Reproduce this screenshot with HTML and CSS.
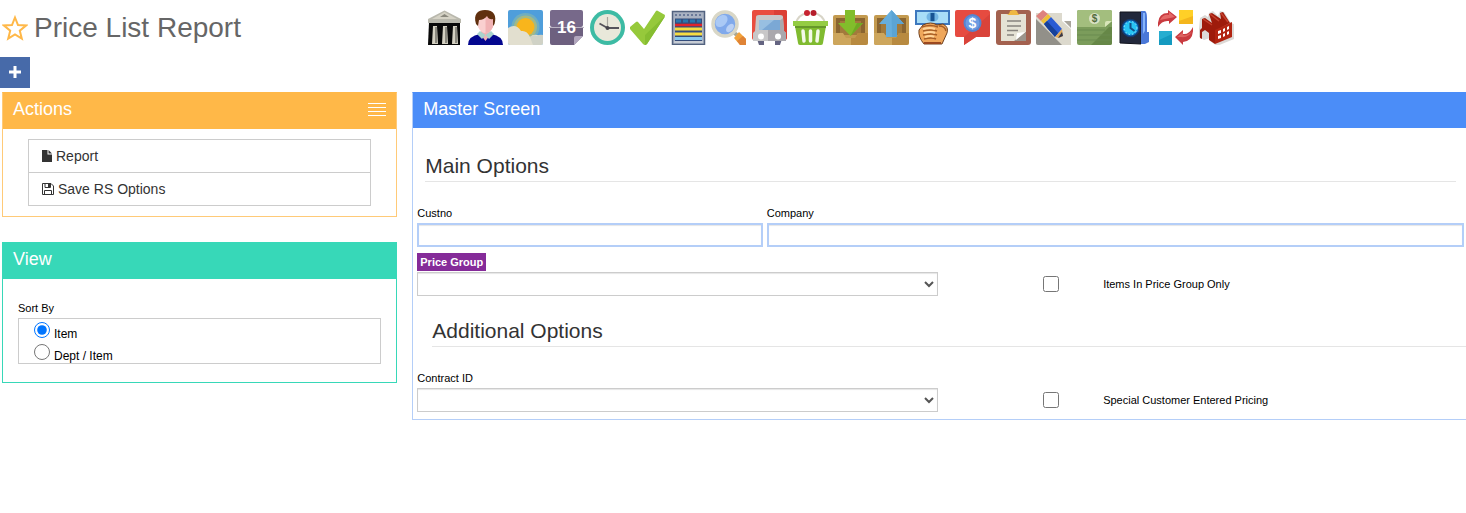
FILE: index.html
```html
<!DOCTYPE html>
<html lang="en">
<head>
    <meta charset="UTF-8">
    <meta name="viewport" content="width=device-width, initial-scale=1.0">
    <title>Price List Report</title>
    <link rel="stylesheet" href="styles.css">
</head>
<body>
    <header class="page-header">
        <h1 class="page-title">
            <svg class="star" viewBox="0 0 26 26"><path d="M13 2.500l3 7.500 8 .5-6.200 5.200 2 8L13 19.500l-6.800 4.200 2-8L2 10.500l8-.5z" fill="none" stroke="#ffb848" stroke-width="2"/></svg>
            Price List Report
        </h1>
        <nav class="toolbar">
            <!-- bank -->
            <a href="#" aria-label="Bank"><svg viewBox="0 0 35 35">
                <path d="M2 12h31v23H1z" fill="#080808"/>
                <path d="M17.500.5L34 9v4H1V9z" fill="#b9b8ad"/>
                <path d="M17.500 2L30 9H5z" fill="#d5d2c5"/><path d="M13 7l4.500-3L22 7z" fill="#8a887d"/>
                <path d="M6 16h4l1 18H5zM16 16h4l1 18h-6zM26 16h4l1 18h-6z" fill="#d4d1c2"/>
                <path d="M9 17v16M19 17v16M29 17v16" stroke="#8b897f" stroke-width="2"/>
            </svg></a>
            <!-- person -->
            <a href="#" aria-label="Customers"><svg viewBox="0 0 35 35">
                <path d="M0 35q0-9 12-11h11q12 2 12 11z" fill="#04078f"/>
                <path d="M13 19h9v6l-4.500 6-4.500-6z" fill="#f1b3b5"/>
                <path d="M12 21l-3 3 5 5 3.500-4zM23 21l3 3-5 5-3.500-4z" fill="#a9d3cd"/>
                <path d="M9 9q0-6 8.500-6T26 9l-1 8q-3 6-7.500 6T10 17z" fill="#fad0d0"/>
                <path d="M17.500 4q8 0 8.500 5l-1 8q-3 6-7.500 6z" fill="#f1b3b5"/>
                <path d="M8 14C5 4 10 0 17 0c9 0 12 6 9.500 14l-1.500 2V9q-4 1-6-3-3 4-8 4l-1 6z" fill="#60300f"/>
            </svg></a>
            <!-- weather -->
            <a href="#" aria-label="Weather"><svg viewBox="0 0 35 35">
                <rect width="35" height="35" rx="2" fill="#4f9edb"/>
                <circle cx="17.500" cy="17" r="14" fill="#70aebf"/><circle cx="17.500" cy="17" r="11.500" fill="#a3b985"/>
                <circle cx="17.500" cy="17" r="9" fill="#f8b51c"/>
                <path d="M0 18q8-5 13 3 6-1 9 6 3-3 7-2 3 1 6 1v7q0 2-2 2H2q-2 0-2-2z" fill="#e2dfcf"/>
                <path d="M22 27q3-3 7-1 3-2 6-1v8l-2 2h-8z" fill="#d0d2c6"/>
            </svg></a>
            <!-- calendar -->
            <a href="#" aria-label="Calendar"><svg viewBox="0 0 35 35">
                <rect x="1" width="33" height="17" rx="2" fill="#77698a"/>
                <path d="M1 18h33v8l-9 9H3q-2 0-2-2z" fill="#6d607f"/>
                <path d="M25 35v-7q0-2 2-2h7z" fill="#b1a6bd"/>
                <path d="M0 17.500h35" stroke="#bab3c3"/>
                <text x="17.500" y="23" text-anchor="middle" class="icon-text" font-size="17" fill="#fff">16</text>
            </svg></a>
            <!-- clock -->
            <a href="#" aria-label="Clock"><svg viewBox="0 0 35 35">
                <circle cx="17.500" cy="17.500" r="17.500" fill="#3dbba4"/><circle cx="17.500" cy="17.500" r="13.500" fill="#e9e8da"/>
                <path d="M17.500 18V7" stroke="#a8a69e" stroke-width="1.200"/>
                <path d="M17.500 18H29M17.500 18L9.500 13.500" stroke="#55535b" stroke-width="1.800"/><circle cx="17.500" cy="18" r="2" fill="#47454c"/>
            </svg></a>
            <!-- check -->
            <a href="#" aria-label="Approve"><svg viewBox="0 0 35 35">
                <path d="M0 17l6-5q1-1 2 0l6 7L26 1q1-1 2 0l7 4q0 1-1 3L17 34q-2 2-4 0L0 19z" fill="#96c93b"/>
                <path d="M15 25L35 6q0 1-1 2L17 34q-1 1-2 1z" fill="#86bd31"/>
            </svg></a>
            <!-- register -->
            <a href="#" aria-label="Schedule"><svg viewBox="0 0 35 35">
                <rect x="1.500" y="1.500" width="32" height="33" fill="#a9b2c2" stroke="#52627f" stroke-width="1.500"/>
                <path d="M4 5h27" stroke="#6a7999" stroke-width="2" stroke-dasharray="2 2"/>
                <path d="M4 8.500h27v23H4z" fill="#344c7b"/>
                <path d="M5 11h25" stroke="#2877af" stroke-width="3" stroke-dasharray="5 2"/>
                <path d="M4 15h27" stroke="#df232b" stroke-width="2.500"/>
                <path d="M4 19h27M4 24h27" stroke="#f6dc43" stroke-width="3"/>
                <path d="M4 28.500h27" stroke="#88c9ed" stroke-width="3"/>
                <path d="M3 32h29" stroke="#c7ccd4" stroke-width="2"/>
            </svg></a>
            <!-- search -->
            <a href="#" aria-label="Search"><svg viewBox="0 0 35 35">
                <path d="M22 22l4 3" stroke="#a9a895" stroke-width="4"/><path d="M23 28l5-6 7 7v6h-6z" fill="#f2a23a"/><path d="M26 31l6-5 3 3v6h-6z" fill="#df8336"/>
                <circle cx="14" cy="14" r="12" fill="#80a9eb" stroke="#d9d7c7" stroke-width="3.500"/>
                <ellipse cx="10.500" cy="11" rx="5" ry="7" transform="rotate(45 10.500 11)" fill="#aac9f5"/><ellipse cx="19" cy="18" rx="3" ry="5" transform="rotate(40 19 18)" fill="#b9d0f5"/>
            </svg></a>
            <!-- truck -->
            <a href="#" aria-label="Shipping"><svg viewBox="0 0 35 35">
                <path d="M5 29h7v6H7zM23 29h7l-2 6h-5z" fill="#646481"/>
                <rect width="35" height="30" rx="2" fill="#e94d3f"/><path d="M22 0h11q2 0 2 2v26l-2 2H22z" fill="#db4035"/>
                <path d="M4 7q0-2 3-2h21q3 0 3 2l1 14 2 2v8H1v-8l2-2z" fill="#c8c7c8"/>
                <path d="M16 20L31 8l1 13 2 2v8H16z" fill="#aaa8ad"/>
                <path d="M7 10h21v10H7z" fill="#7ba8d5"/><path d="M7 10h15L10 20H7z" fill="#98bfe1"/>
                <circle cx="9" cy="26.500" r="3" fill="#fff"/><circle cx="26" cy="26.500" r="3" fill="#fff"/>
            </svg></a>
            <!-- basket -->
            <a href="#" aria-label="Basket"><svg viewBox="0 0 35 35">
                <path d="M3 13Q5 5 14 3M32 13Q30 5 21 3" fill="none" stroke="#d8d5c8" stroke-width="2"/>
                <circle cx="14" cy="3" r="3" fill="#c72330"/><circle cx="20.500" cy="3" r="3" fill="#b51d2b"/>
                <path d="M0 11h35v5H0z" fill="#94cc43"/><path d="M2 16h31l-3 17q0 2-2 2H7q-2 0-2-2z" fill="#80bb30"/>
                <path d="M2 16h31v2H2z" fill="#66972a"/>
                <path d="M10 21l1 10M17.500 21v10M25 21l-1 10" stroke="#f3f9e8" stroke-width="3.500" stroke-linecap="round"/>
            </svg></a>
            <!-- inbox in -->
            <a href="#" aria-label="Receive"><svg viewBox="0 0 35 35">
                <rect y="5" width="35" height="30" rx="2" fill="#c39a4f"/><path d="M3 8h29v17H3z" fill="#8a6531"/><path d="M7 11h21v14H7z" fill="#a27a3c"/>
                <path d="M0 23h10l3 5h9l3-5h10v10q0 2-2 2H2q-2 0-2-2z" fill="#cda65c"/><path d="M18 28h4l3-5h10v10l-2 2H18z" fill="#b88a40"/>
                <path d="M12 0h10v13h8L17.500 26 5 13h7z" fill="#82bd2b"/><path d="M17.500 26L30 13h-6z" fill="#6fa923"/>
            </svg></a>
            <!-- inbox out -->
            <a href="#" aria-label="Send"><svg viewBox="0 0 35 35">
                <rect y="5" width="35" height="30" rx="2" fill="#c39a4f"/><path d="M3 8h29v17H3z" fill="#8a6531"/><path d="M7 11h21v14H7z" fill="#a27a3c"/>
                <path d="M0 23h10l3 5h9l3-5h10v10q0 2-2 2H2q-2 0-2-2z" fill="#cda65c"/><path d="M18 28h4l3-5h10v10l-2 2H18z" fill="#b88a40"/>
                <path d="M17.500 0L30 14h-7v13H12V14H5z" fill="#66aedd"/><path d="M17.500 0L30 14h-7v13h-5z" fill="#5ba4d4"/>
            </svg></a>
            <!-- hand with bill -->
            <a href="#" aria-label="Payment"><svg viewBox="0 0 35 35">
                <rect x="1" y="1" width="33" height="13" fill="#a8ddf7" stroke="#3d78be" stroke-width="2"/>
                <ellipse cx="17.500" cy="7" rx="6" ry="5" fill="#73b5e4"/><path d="M17.500 3v8" stroke="#175393" stroke-width="4"/>
                <path d="M8 15q8-4 14 0l6-1q6 3 4 9l-5 11H9q-6-7-5-14z" fill="#efa65a" stroke="#70401e"/>
                <path d="M7 17q8-3 16 0M8 21q9-2 14 0M8 25q9-2 14 0M9 29q8-2 12 0M24 16q6 0 7 5" fill="none" stroke="#a65d26" stroke-width="1.500"/>
                <path d="M8 19q7-2 12 0M9 23q7-2 11 0M10 27q6-2 9 0" fill="none" stroke="#ffd499" stroke-width="2"/>
                <path d="M9 33h17" stroke="#9b4820" stroke-width="2"/>
            </svg></a>
            <!-- dollar bubble -->
            <a href="#" aria-label="Quotes"><svg viewBox="0 0 35 35">
                <path d="M2 0h31q2 0 2 2v23q0 2-2 2H21L9 35v-8H2q-2 0-2-2V2q0-2 2-2z" fill="#e64b40"/><path d="M35 4v21q0 2-2 2H21L9 35v-8z" fill="#d9433a"/>
                <circle cx="17.500" cy="13" r="9" fill="#5584cf"/><circle cx="17.500" cy="13" r="7" fill="#6c9be2"/>
                <text x="17.500" y="18" text-anchor="middle" class="icon-text" font-size="14" fill="#fff">$</text>
            </svg></a>
            <!-- clipboard -->
            <a href="#" aria-label="Clipboard"><svg viewBox="0 0 35 35">
                <rect width="35" height="35" rx="3" fill="#a3614f"/><path d="M5 4h25v18l-9 9H5z" fill="#e5e2d5"/>
                <path d="M18 31l12-9v9z" fill="#9b948b"/><path d="M20 30l1-7 8-1z" fill="#fff"/>
                <path d="M10 5q3 0 4-4 4-2 7 0 1 4 4 4z" fill="#efb740"/>
                <path d="M11 11h14M11 16h14M11 20.500h11M11 25h7" stroke="#87837e" stroke-width="1.500"/>
            </svg></a>
            <!-- pencil -->
            <a href="#" aria-label="Edit"><svg viewBox="0 0 35 35">
                <path d="M0 3h26v8l9 8v16H2q-2 0-2-2z" fill="#dcd9cd"/><path d="M28 11l7 7v-7z" fill="#aaa69d"/><path d="M0 9l26 26H2q-2 0-2-2z" fill="#929089"/>
                <path d="M0 6l7-6 5 4-7 7z" fill="#de827e"/><path d="M5 11l7-7 3 3-7 7z" fill="#edbf39"/>
                <path d="M8 14l7-7 11 12-7 8z" fill="#295bd3"/><path d="M11 18l-3-4 3-3 11 12-3 4z" fill="#174199"/>
                <path d="M19 27l7-8 1 7-4 2z" fill="#e2aa5a"/><path d="M22 28l5-2-1-4z" fill="#36384b"/>
            </svg></a>
            <!-- money -->
            <a href="#" aria-label="Money"><svg viewBox="0 0 35 35">
                <rect width="35" height="35" rx="2" fill="#7b9c5b"/><path d="M2 0h31q2 0 2 2v9l-7 6H0V2q0-2 2-2z" fill="#a3be7e"/>
                <path d="M14 35L32 17h3v16q0 2-2 2z" fill="#668747"/><path d="M0 20h28M0 25h35M0 30h35" stroke="#6a8b50"/>
                <path d="M28 17v-4q0-2 2-2h5z" fill="#d8e5b9"/>
                <circle cx="17.500" cy="8.500" r="5.500" fill="#d8e1c5"/>
                <text x="17.500" y="12" text-anchor="middle" class="icon-text" font-size="10" fill="#526c3d">$</text>
            </svg></a>
            <!-- time folder -->
            <a href="#" aria-label="Time Clock"><svg viewBox="0 0 35 35">
                <path d="M2 2h21v32L2 33z" fill="#22283b" stroke="#10131d"/><path d="M23 1h4q2 1 2 7v14h2v10l-4 2h-4z" fill="#4a78d8"/><path d="M25 3h2v18l-2 3z" fill="#86b5fa"/>
                <circle cx="12.500" cy="18" r="8.500" fill="#087fd1" stroke="#153a70" stroke-width="1.500"/><circle cx="12.500" cy="18" r="6.500" fill="#27c4f3" stroke="#a5f4ff" stroke-dasharray="1.500 2"/>
                <path d="M12.500 13v5l4 3" fill="none" stroke="#125188" stroke-width="2"/>
            </svg></a>
            <!-- exchange -->
            <a href="#" aria-label="Transfer"><svg viewBox="0 0 35 35">
                <path d="M21 0h14v14H21z" fill="#f4b61c"/><path d="M21 0h14v6L21 11z" fill="#ffd027"/>
                <path d="M1 21h13v14H1z" fill="#149ac0"/><path d="M1 21h13v3L1 30z" fill="#26add0"/>
                <path d="M0 17Q-1 3 10 3V0l9 7-8 7v-3Q4 10 0 17z" fill="#c93b40"/><path d="M2 10q3-6 9-5V2l6 5z" fill="#e46967"/>
                <path d="M35 17q1 14-10 15v3l-8-8 8-7v4q6 1 10-7z" fill="#c93b40"/><path d="M34 21q-3 7-11 6l-4 0 6-5v3q5 1 9-4z" fill="#dd6260"/>
            </svg></a>
            <!-- factory -->
            <a href="#" aria-label="Factory"><svg viewBox="0 0 35 35">
                <path d="M0 19L1 8l5-3 3 2 1-4 4-2 5 5 2-5 4 1 7 11 3 1v15l-17 7-7-5v-3l-6 2-5-3z" fill="#dcd9d6"/>
                <path d="M1 20l2-2V9l3-1 7 5-3-9 3-1 9 6-1-6 3-1 7 11-15 8v13l-6-4v-7l-4-3-3 2v7l-2-1z" fill="#9e1b0b"/>
                <path d="M16 20l17-8v15l-17 7z" fill="#b22411"/>
                <path d="M4 9l9 6M11 4l9 7M22 3l7 9" stroke="#c5402d" stroke-width="1.500"/>
                <path d="M19 21l3-1v3l-3 1zM24 19l2-1v3l-2 1zM28 17l2-1v3l-2 1zM19 26l3-1v3l-3 1zM24 24l2-1v3l-2 1zM28 22l2-1v3l-2 1z" fill="#fff"/>
            </svg></a>
        </nav>
    </header>

    <button type="button" class="add-button" aria-label="Add">
        <svg viewBox="0 0 12 12"><path d="M6 0v12M0 6h12" stroke="#fff" stroke-width="3"/></svg>
    </button>

    <div class="columns">
        <aside>
            <section class="panel actions">
                <div class="panel-head">
                    <h2>Actions</h2>
                    <button type="button" class="menu-button" aria-label="Menu">
                        <svg viewBox="0 0 18 13" shape-rendering="crispEdges"><path d="M0 .5h18M0 4.500h18M0 8.500h18M0 12.500h18" stroke="#fff"/></svg>
                    </button>
                </div>
                <div class="action-list">
                    <a href="#"><svg class="file" viewBox="0 0 10 12"><path d="M0 0h5.500v4.500H10V12H0z" fill="#333"/><path d="M6.500 0L10 3.500H6.500z" fill="#333"/></svg>Report</a>
                    <a href="#"><svg class="save" viewBox="0 0 12 12"><path d="M.5.5h8.500l2.500 2.500v8.500H.5zM3 .5v4h5.500v-4M2.500 11.500v-4h7v4" fill="none" stroke="#333"/><path d="M6 1h2v3H6z" fill="#333"/></svg>Save RS Options</a>
                </div>
            </section>

            <section class="panel view">
                <div class="panel-head"><h2>View</h2></div>
                <div class="view-body">
                    <div class="field-label" id="sortBy">Sort By</div>
                    <div class="radio-box" role="radiogroup" aria-labelledby="sortBy">
                        <label><input type="radio" name="sort" checked>Item</label>
                        <label><input type="radio" name="sort">Dept / Item</label>
                    </div>
                </div>
            </section>
        </aside>

        <main class="panel master">
            <div class="panel-head"><h2>Master Screen</h2></div>
            <form class="master-body">
                <h3 class="main-options">Main Options</h3>
                <div class="row customer">
                    <div>
                        <label class="field-label" for="custno">Custno</label>
                        <input type="text" id="custno">
                    </div>
                    <div>
                        <label class="field-label" for="company">Company</label>
                        <input type="text" id="company">
                    </div>
                </div>
                <div class="row halves price">
                    <div>
                        <label class="tag" for="priceGroup">Price Group</label>
                        <select id="priceGroup"><option></option></select>
                    </div>
                    <label class="check"><input type="checkbox">Items In Price Group Only</label>
                </div>

                <h3 class="additional-options">Additional Options</h3>
                <div class="row halves">
                    <div>
                        <label class="field-label" for="contract">Contract ID</label>
                        <select id="contract"><option></option></select>
                    </div>
                    <label class="check"><input type="checkbox">Special Customer Entered Pricing</label>
                </div>
            </form>
        </main>
    </div>
</body>
</html>
```

FILE: styles.css
```css
* {
    box-sizing: border-box;
}
body {
    margin: 0;
    font-family: "Liberation Sans", Arial, sans-serif;
    font-size: 11px;
    color: #000;
    background-color: #fff;
}
h1, h2, h3 {
    margin: 0;
    font-weight: normal;
}
svg {
    display: block;
}
.page-header {
    display: grid;
    grid-template-columns: 425px 1fr;
    align-items: center;
    height: 55px;
    padding-left: 2px;
    margin-bottom: 2px;
}
.page-title {
    display: flex;
    align-items: center;
    gap: 6px;
    font-size: 28px;
    color: #666;
}
.star {
    width: 26px;
    height: 26px;
}
.toolbar {
    display: flex;
    justify-content: space-between;
    max-width: 807px;
}
.toolbar svg {
    width: 35px;
    height: 35px;
}
.icon-text {
    font-family: "Liberation Sans", Arial, sans-serif;
    font-weight: bold;
}
.add-button {
    display: flex;
    align-items: center;
    justify-content: center;
    width: 30px;
    height: 31px;
    padding: 0 0 2px;
    margin-bottom: 4px;
    border: none;
    background-color: #476aa9;
    cursor: pointer;
}
.add-button svg {
    width: 12px;
    height: 12px;
}

/* Panels */
.columns {
    display: grid;
    grid-template-columns: 27% 1fr;
    column-gap: 15px;
    align-items: start;
    padding-left: 2px;
}
.panel {
    border: 1px solid;
}
.panel-head {
    display: flex;
    align-items: center;
    justify-content: space-between;
    height: 36px;
    padding: 0 10px 4px;
    color: #fff;
}
.panel-head h2 {
    font-size: 18px;
    line-height: 20px;
}
.actions {
    border-color: #ffca78;
    border-top-color: #ffb848;
    margin-bottom: 25px;
}
.actions .panel-head {
    background-color: #ffb848;
}
.menu-button {
    padding: 0;
    border: none;
    background: none;
    cursor: pointer;
}
.menu-button svg {
    width: 18px;
    height: 13px;
}
.action-list {
    margin: 10px 25px;
    border: 1px solid #ccc;
}
.action-list a {
    display: flex;
    align-items: center;
    height: 32px;
    padding-left: 13px;
    font-size: 14px;
    color: #333;
    text-decoration: none;
}
.action-list a + a {
    height: 33px;
    border-top: 1px solid #ccc;
}
.action-list svg {
    height: 12px;
    margin-right: 4px;
}
.file {
    width: 10px;
}
.save {
    width: 12px;
}
.view {
    border-color: #37d8b8;
}
.view .panel-head {
    background-color: #37d8b8;
}
.view-body {
    padding: 19px 15px 18px;
}
.field-label {
    display: block;
    line-height: 20px;
}
.radio-box {
    border: 1px solid #ccc;
    padding-left: 15px;
}
.radio-box label {
    display: flex;
    align-items: baseline;
    gap: 4px;
    height: 22px;
    padding-top: 3px;
    font-size: 12px;
}
input[type="radio"], input[type="checkbox"] {
    width: 16px;
    height: 16px;
    margin: 0;
}

/* Master screen */
.master {
    border-color: #b4cef8;
    border-top-color: #4b8df8;
    border-right: none;
}
.master .panel-head {
    height: 35px;
    padding-bottom: 3px;
    background-color: #4b8df8;
}
.master-body {
    padding: 23px 2px 7px 4px;
}
.master-body h3 {
    font-size: 21px;
    line-height: 30px;
    color: #333;
    border-bottom: 1px solid #e5e5e5;
    margin-bottom: 21px;
}
.master-body .main-options {
    margin-left: 8px;
    margin-right: 8px;
}
.master-body .additional-options {
    margin-top: 20px;
    margin-left: 15px;
    margin-right: -2px;
}
.row {
    display: grid;
    column-gap: 4px;
    align-items: end;
}
.customer {
    grid-template-columns: 33% 1fr;
}
.halves {
    grid-template-columns: 1fr 1fr;
    column-gap: 5px;
}
.price {
    margin-top: 6px;
}
input[type="text"], select {
    display: block;
    width: 100%;
    height: 24px;
    background-color: #fff;
    border-radius: 0;
    box-shadow: inset 0 1px 1px rgba(0, 0, 0, 0.1);
}
input[type="text"] {
    border: 2px solid #b4cef8;
}
select {
    color: #555;
    border: 1px solid #ccc;
}
.tag {
    display: block;
    width: fit-content;
    padding: 0 3px;
    margin-bottom: 1px;
    line-height: 18px;
    font-weight: bold;
    color: #fff;
    background-color: #852b99;
}
.check {
    display: flex;
    align-items: center;
    gap: 44px;
    height: 24px;
    padding-left: 100px;
}
```
